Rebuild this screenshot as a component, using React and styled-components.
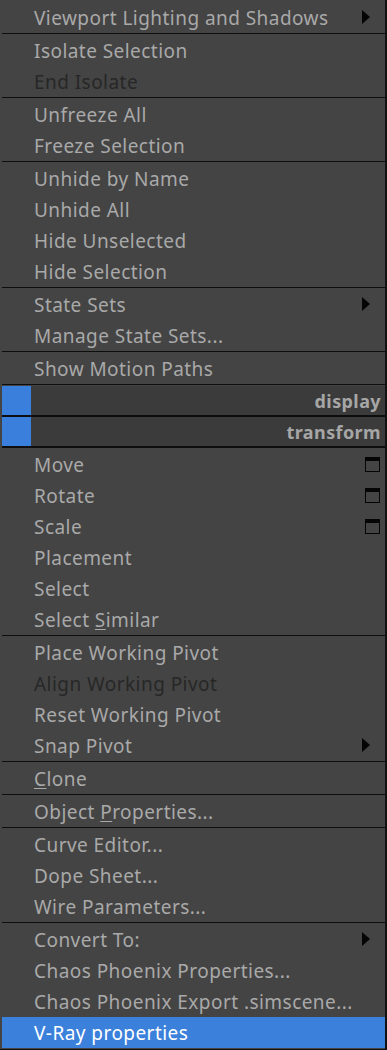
import React from "react";
import styled, { createGlobalStyle } from "styled-components";

const GlobalStyle = createGlobalStyle`
  html, body {
    margin: 0;
    padding: 0;
    background: #111;
  }
  body {
    font-family: "Noto Sans", "Open Sans", sans-serif;
  }
`;

const Menu = styled.div`
  width: 383px;
  height: 1047px;
  padding: 2px 0 0 2px;
  background: #444444;
  border-right: 2px solid #111;
  display: flex;
  flex-direction: column;
  overflow: hidden;
`;

const Item = styled.div`
  position: relative;
  height: 31px;
  display: flex;
  align-items: center;
  padding-left: 32px;
  font-size: 19px;
  letter-spacing: 0.45px;
  color: ${(p) => (p.$disabled ? "#272727" : p.$active ? "#ffffff" : "#a9a9a9")};
  background: ${(p) => (p.$active ? "#3b80db" : "transparent")};
  white-space: pre;
  flex-shrink: 0;
`;

const Text = styled.span`
  margin-top: 1px;
`;

const Separator = styled.div`
  height: 1px;
  background: #0e0e0e;
  margin-bottom: 1px;
  flex-shrink: 0;
`;

const Header = styled.div`
  height: 29px;
  display: flex;
  align-items: center;
  justify-content: space-between;
  background: #3b3b3b;
  border-bottom: 2px solid #0e0e0e;
  flex-shrink: 0;
  font-weight: bold;
  font-size: 18px;
  letter-spacing: 0.4px;
  color: #a6a6a6;
  padding-right: 4px;
  margin-bottom: ${(p) => (p.$last ? "1px" : "0")};
`;

const HeaderSwatch = styled.div`
  width: 29px;
  height: 100%;
  background: #3b7fdd;
`;

const Arrow = styled.span`
  position: absolute;
  right: 15px;
  top: 8px;
  width: 0;
  height: 0;
  border-top: 7px solid transparent;
  border-bottom: 7px solid transparent;
  border-left: 8px solid #050505;
`;

const OptionBox = styled.span`
  position: absolute;
  right: 5px;
  top: 8px;
  width: 13px;
  height: 10px;
  border: 1px solid #050505;
  border-top-width: 4px;
  background: #444;
`;

const Key = styled.u`
  text-decoration-thickness: 1px;
  text-underline-offset: 2px;
`;

const groups = [
  [{ label: "Viewport Lighting and Shadows", sub: true }],
  [{ label: "Isolate Selection" }, { label: "End Isolate", disabled: true }],
  [{ label: "Unfreeze All" }, { label: "Freeze Selection" }],
  [
    { label: "Unhide by Name" },
    { label: "Unhide All" },
    { label: "Hide Unselected" },
    { label: "Hide Selection" },
  ],
  [{ label: "State Sets", sub: true }, { label: "Manage State Sets..." }],
  [{ label: "Show Motion Paths" }],
];

const groups2 = [
  [
    { label: "Move", box: true },
    { label: "Rotate", box: true },
    { label: "Scale", box: true },
    { label: "Placement" },
    { label: "Select" },
    { label: "Select Similar", key: 7 },
  ],
  [
    { label: "Place Working Pivot" },
    { label: "Align Working Pivot", disabled: true },
    { label: "Reset Working Pivot" },
    { label: "Snap Pivot", sub: true },
  ],
  [{ label: "Clone", key: 0 }],
  [{ label: "Object Properties...", key: 7 }],
  [
    { label: "Curve Editor..." },
    { label: "Dope Sheet..." },
    { label: "Wire Parameters..." },
  ],
  [
    { label: "Convert To:", sub: true },
    { label: "Chaos Phoenix Properties..." },
    { label: "Chaos Phoenix Export .simscene..." },
    { label: "V-Ray properties", active: true },
  ],
];

const Label = ({ text, k }) => {
  if (k === undefined) return <Text>{text}</Text>;
  return (
    <Text>
      {text.slice(0, k)}
      <Key>{text[k]}</Key>
      {text.slice(k + 1)}
    </Text>
  );
};

const renderGroups = (list) =>
  list.map((group, gi) => (
    <React.Fragment key={gi}>
      {gi > 0 && <Separator />}
      {group.map((it) => (
        <Item key={it.label} $disabled={it.disabled} $active={it.active}>
          <Label text={it.label} k={it.key} />
          {it.sub && <Arrow />}
          {it.box && <OptionBox />}
        </Item>
      ))}
    </React.Fragment>
  ));

export default function App() {
  return (
    <>
      <GlobalStyle />
      <Menu>
        {renderGroups(groups)}
        <Separator />
        <Header>
          <HeaderSwatch />
          display
        </Header>
        <Header $last>
          <HeaderSwatch />
          transform
        </Header>
        {renderGroups(groups2)}
      </Menu>
    </>
  );
}
